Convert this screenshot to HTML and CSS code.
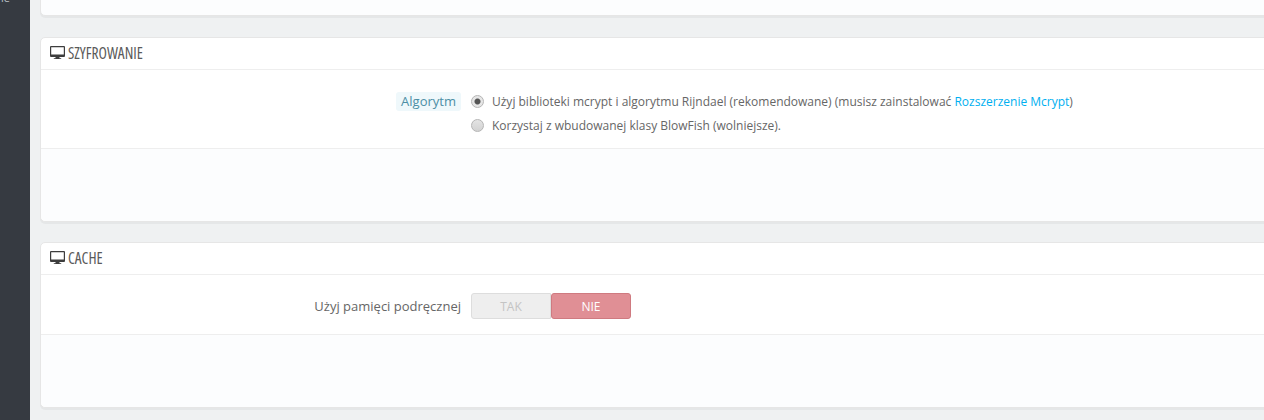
FILE: index.html
```html
<!DOCTYPE html>
<html lang="pl">
<head>
<meta charset="utf-8">
<title>Wydajność</title>
<link rel="stylesheet" href="styles.css">
</head>
<body>
<div class="app">
  <aside class="sidebar"><span class="side-text">ie</span></aside>
  <main class="content">
    <section class="panel panel-top"></section>

    <section class="panel panel-enc">
      <h3 class="panel-heading">
        <svg class="icon" viewBox="0 0 15 14"><path d="M1 0h13a1 1 0 0 1 1 1v9a1 1 0 0 1-1 1H9.500v1.200h1.700V13H3.800v-.8h1.700V11H1a1 1 0 0 1-1-1V1a1 1 0 0 1 1-1zm.2 1.200v7.300h12.600V1.200z"/></svg>
        <span class="heading-text">SZYFROWANIE</span>
      </h3>
      <div class="form-body form-body-enc">
        <div class="label-col"><span class="label label-hint">Algorytm</span></div>
        <div class="radios">
          <label class="radio-row"><span class="radio radio-on"></span><span>Użyj biblioteki mcrypt i algorytmu Rijndael (rekomendowane) (musisz zainstalować <a class="link" href="#">Rozszerzenie Mcrypt</a>)</span></label>
          <label class="radio-row"><span class="radio"></span><span>Korzystaj z wbudowanej klasy BlowFish (wolniejsze).</span></label>
        </div>
      </div>
      <div class="panel-footer footer-enc"></div>
    </section>

    <section class="panel panel-cache">
      <h3 class="panel-heading">
        <svg class="icon" viewBox="0 0 15 14"><path d="M1 0h13a1 1 0 0 1 1 1v9a1 1 0 0 1-1 1H9.500v1.200h1.700V13H3.800v-.8h1.700V11H1a1 1 0 0 1-1-1V1a1 1 0 0 1 1-1zm.2 1.200v7.300h12.600V1.200z"/></svg>
        <span class="heading-text">CACHE</span>
      </h3>
      <div class="form-body form-body-cache">
        <div class="label-col"><span class="label">Użyj pamięci podręcznej</span></div>
        <div class="switch">
          <span class="switch-yes">TAK</span>
          <span class="switch-no">NIE</span>
        </div>
      </div>
      <div class="panel-footer footer-cache"></div>
    </section>
  </main>
</div>
</body>
</html>
```
FILE: styles.css
```css
* { box-sizing: border-box; }
html, body { margin: 0; height: 420px; overflow: hidden; }
body {
  background: #eff1f2;
  font-family: "Open Sans", sans-serif;
  font-size: 12px;
  color: #666;
}
.app { display: flex; height: 420px; overflow: hidden; }
.sidebar { flex: 0 0 30px; background: #363a41; overflow: hidden; }
.side-text { display: block; margin-top: -10px; padding-left: 1px; color: #bcc0c6; font-size: 11px; }
.content {
  flex: 0 0 1300px;
  padding-left: 10px;
  display: flex;
  flex-direction: column;
  gap: 20px;
  margin-top: -84px;
}
.panel {
  background: #fff;
  border: 1px solid #e6e6e6;
  border-radius: 5px;
  box-shadow: 0 2px 0 rgba(0, 0, 0, .04);
  padding: 0;
}
.panel-top { height: 100px; margin-bottom: 1px; background: #fcfdfe; }
.panel-heading {
  display: flex;
  align-items: center;
  gap: 3px;
  height: 32px;
  margin: 0;
  padding: 0 0 1px 9px;
  border-bottom: 1px solid #eeeeee;
  font-family: "Open Sans", sans-serif;
  font-stretch: 75%;
  font-size: 15.400px;
  font-weight: 400;
  color: #5a5a5a;
}
.icon { width: 15px; height: 14px; fill: #3d3d3d; }
.form-body { display: flex; }
.form-body-enc { height: 78px; padding-top: 22px; }
.form-body-cache { height: 59px; padding-top: 18px; }
.label-col {
  flex: 0 0 420px;
  display: flex;
  justify-content: flex-end;
  align-items: flex-start;
}
.label { font-size: 13px; line-height: 26px; color: #666; }
.label-hint {
  height: 19px;
  line-height: 19px;
  padding: 0 5px;
  background: #eff8fb;
  border-radius: 3px;
  color: #4c8ea5;
}
.radios { display: flex; flex-direction: column; gap: 8px; padding: 1px 0 0 10px; }
.radio-row { display: flex; align-items: center; gap: 8px; height: 16px; color: #666; }
.radio {
  width: 13px;
  height: 13px;
  border-radius: 50%;
  border: 1px solid #b5b5b5;
  background: linear-gradient(#e4e4e4, #d2d2d2);
  flex: none;
}
.radio-on { background: radial-gradient(circle, #555 0 2.500px, #e6e6e6 3.500px); }
.link { color: #00aff0; text-decoration: none; }
.switch { display: flex; margin-left: 10px; width: 160px; height: 26px; font-size: 12px; }
.switch-yes {
  flex: 0 0 80px;
  display: flex; align-items: center; justify-content: center;
  background: #eeeeee;
  border: 1px solid #dddddd;
  border-radius: 3px 0 0 3px;
  color: #c4c4c4;
}
.switch-no {
  flex: 0 0 80px;
  display: flex; align-items: center; justify-content: center;
  background: #e08f95;
  border: 1px solid #cf7a80;
  border-radius: 3px;
  color: #fff;
}
.panel-footer { background: #fcfdfe; border-top: 1px solid #eeeeee; border-radius: 0 0 5px 5px; }
.footer-enc { height: 73px; }
.footer-cache { height: 73px; }
```
